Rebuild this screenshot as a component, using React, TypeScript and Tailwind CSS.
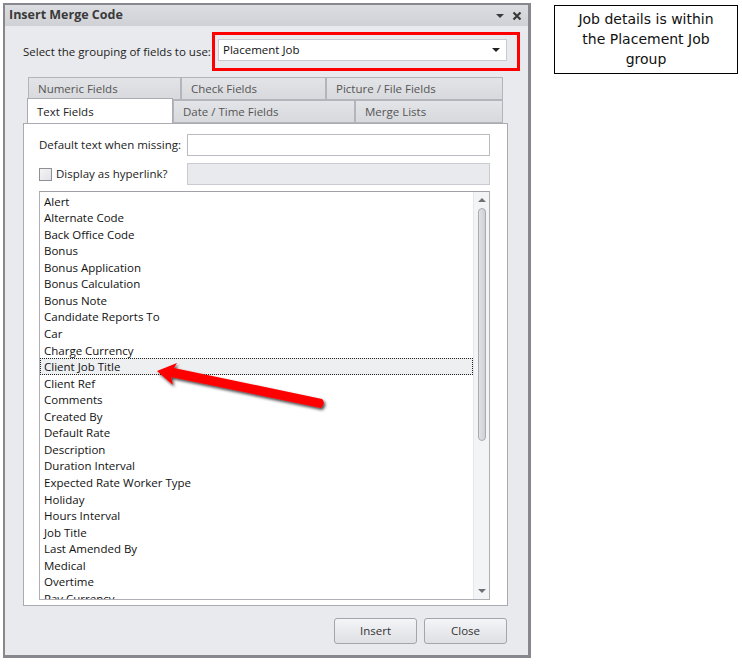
import React from 'react'

const FIELDS = [
  'Alert',
  'Alternate Code',
  'Back Office Code',
  'Bonus',
  'Bonus Application',
  'Bonus Calculation',
  'Bonus Note',
  'Candidate Reports To',
  'Car',
  'Charge Currency',
  'Client Job Title',
  'Client Ref',
  'Comments',
  'Created By',
  'Default Rate',
  'Description',
  'Duration Interval',
  'Expected Rate Worker Type',
  'Holiday',
  'Hours Interval',
  'Job Title',
  'Last Amended By',
  'Medical',
  'Overtime',
  'Pay Currency',
]

const SELECTED = 'Client Job Title'

const ui = { fontFamily: '"Open Sans", "Noto Sans", sans-serif' }

function Tab({ label, width, active = false }: { label: string; width: number; active?: boolean }) {
  if (active) {
    return (
      <div
        className="relative z-10 -mb-px -mt-[2px] flex h-[25px] items-end whitespace-nowrap border border-b-0 border-[#a9abb0] bg-white pb-[3px] pl-[9px] text-[11.5px] text-[#222]"
        style={{ width }}
      >
        {label}
      </div>
    )
  }
  return (
    <div
      className="flex h-[23px] items-center whitespace-nowrap border border-[#b3b5ba] bg-gradient-to-b from-[#e3e4e7] to-[#d8d9dd] pl-[9px] text-[11.5px] text-[#555]"
      style={{ width }}
    >
      {label}
    </div>
  )
}

function Scrollbar() {
  return (
    <div className="flex w-[16px] flex-col items-center border-l border-[#e6e7ea] bg-[#f3f4f6]">
      <div className="mt-[6px] h-0 w-0 border-x-[4px] border-b-[4px] border-x-transparent border-b-[#6e7075]" />
      <div className="mt-[6px] h-[233px] w-[8px] rounded-full border border-[#a9abb1] bg-gradient-to-r from-[#e0e1e5] to-[#cfd0d5]" />
      <div className="flex-1" />
      <div className="mb-[6px] h-0 w-0 border-x-[4px] border-t-[4px] border-x-transparent border-t-[#6e7075]" />
    </div>
  )
}

function Button({ label }: { label: string }) {
  return (
    <button
      type="button"
      className="flex h-[26px] w-[83px] items-center justify-center rounded-[3px] border border-[#a3a5aa] bg-gradient-to-b from-[#f4f5f7] to-[#dfe0e4] text-[11.5px] text-[#333]"
    >
      {label}
    </button>
  )
}

export default function App() {
  return (
    <div className="relative flex h-[664px] w-[742px] items-start overflow-hidden bg-white" style={ui}>
      {/* dialog */}
      <div className="ml-[3px] mt-[3px] flex h-[655px] w-[528px] flex-col border-2 border-r-[3px] border-b-[3px] border-[#86888d] bg-[#e9eaee]">
        <div className="flex h-[21px] items-center bg-gradient-to-b from-[#dcdde1] to-[#d0d1d6] pl-[4px] pr-[6px]">
          <span className="text-[12.5px] font-bold text-[#3a3a3a]">Insert Merge Code</span>
          <div className="ml-auto flex items-center gap-[8px]">
            <div className="h-0 w-0 border-x-[4px] border-t-[4px] border-x-transparent border-t-[#3a3a3a]" />
            <svg width="10" height="10" viewBox="0 0 10 10">
              <path d="M1.5 1.5 L8.5 8.5 M8.5 1.5 L1.5 8.5" stroke="#3a3a3a" strokeWidth="2.2" />
            </svg>
          </div>
        </div>

        <div className="mt-[6px] flex items-center pl-[18px] pr-[8px]">
          <span className="whitespace-nowrap text-[11.5px] text-[#222]">Select the grouping of fields to use:</span>
          <div className="ml-auto h-[39px] w-[308px] shrink-0 border-[3px] border-[#ff0000] pl-[3px] pr-[10px] pt-[4px]">
            <div className="flex h-[22px] items-center border border-[#c9cbd0] bg-white pl-[4px] pr-[6px] text-[11.5px] text-[#111]">
              Placement Job
              <div className="ml-auto h-0 w-0 border-x-[4px] border-t-[4px] border-x-transparent border-t-[#222]" />
            </div>
          </div>
        </div>

        <div className="ml-[18px] mt-[6px] w-[485px]">
          <div className="flex pl-[5px]">
            <Tab label="Numeric Fields" width={153} />
            <Tab label="Check Fields" width={145} />
            <Tab label="Picture / File Fields" width={177} />
          </div>
          <div className="flex pl-[4px]">
            <Tab label="Text Fields" width={146} active />
            <Tab label="Date / Time Fields" width={182} />
            <Tab label="Merge Lists" width={148} />
          </div>

          <div className="flex h-[483px] flex-col border border-[#a9abb0] bg-white pl-[15px] pr-[17px] pt-[10px]">
            <div className="flex items-center">
              <span className="whitespace-nowrap text-[11.5px] text-[#222]">Default text when missing:</span>
              <div className="ml-auto h-[22px] w-[303px] shrink-0 border border-[#b9bbc0] bg-white" />
            </div>
            <div className="mt-[7px] flex items-center">
              <div className="h-[13px] w-[13px] border border-[#8e9095] bg-gradient-to-br from-[#f4f4f6] to-[#e2e3e6]" />
              <span className="ml-[4px] whitespace-nowrap text-[11.5px] text-[#222]">Display as hyperlink?</span>
              <div className="ml-auto h-[22px] w-[303px] shrink-0 border border-[#c9cbd0] bg-[#e9eaee]" />
            </div>

            <div className="mt-[6px] flex h-[409px] border border-[#aeb0b5] border-t-[#9fa1a6] bg-white">
              <div className="flex-1 overflow-hidden pt-[1px]">
                {FIELDS.map((f) => (
                  <div
                    key={f}
                    className={
                      f === SELECTED
                        ? 'flex h-[16.56px] items-center whitespace-nowrap border border-dotted border-[#222] bg-[#eeeff1] pl-[3px] text-[11.5px] text-[#111]'
                        : 'flex h-[16.56px] items-center whitespace-nowrap pl-[4px] text-[11.5px] text-[#111]'
                    }
                  >
                    {f}
                  </div>
                ))}
              </div>
              <Scrollbar />
            </div>
          </div>
        </div>

        <div className="mr-[21px] mt-[12px] flex justify-end gap-[7px]">
          <Button label="Insert" />
          <Button label="Close" />
        </div>
      </div>

      {/* annotation */}
      <div
        className="ml-[23px] mt-[5px] flex h-[69px] w-[184px] items-center justify-center border border-black pb-[2px] text-center text-[14px] leading-[20px] text-[#111]"
        style={{ fontFamily: '"DejaVu Sans", sans-serif' }}
      >
        Job details is within
        <br />
        the Placement Job
        <br />
        group
      </div>

      {/* red arrow overlay */}
      <svg className="pointer-events-none absolute left-0 top-0" width="742" height="664" viewBox="0 0 742 664">
        <defs>
          <filter id="sh" x="-20%" y="-50%" width="140%" height="200%">
            <feDropShadow dx="1.5" dy="2" stdDeviation="1.5" floodColor="#000" floodOpacity="0.75" />
          </filter>
        </defs>
        <g filter="url(#sh)">
          <path
            d="M157 371 L177 363 L174 368 L322 399 Q326 403 321 408 L171 377 L173 385 Z"
            fill="#ff0000"
          />
        </g>
      </svg>
    </div>
  )
}
